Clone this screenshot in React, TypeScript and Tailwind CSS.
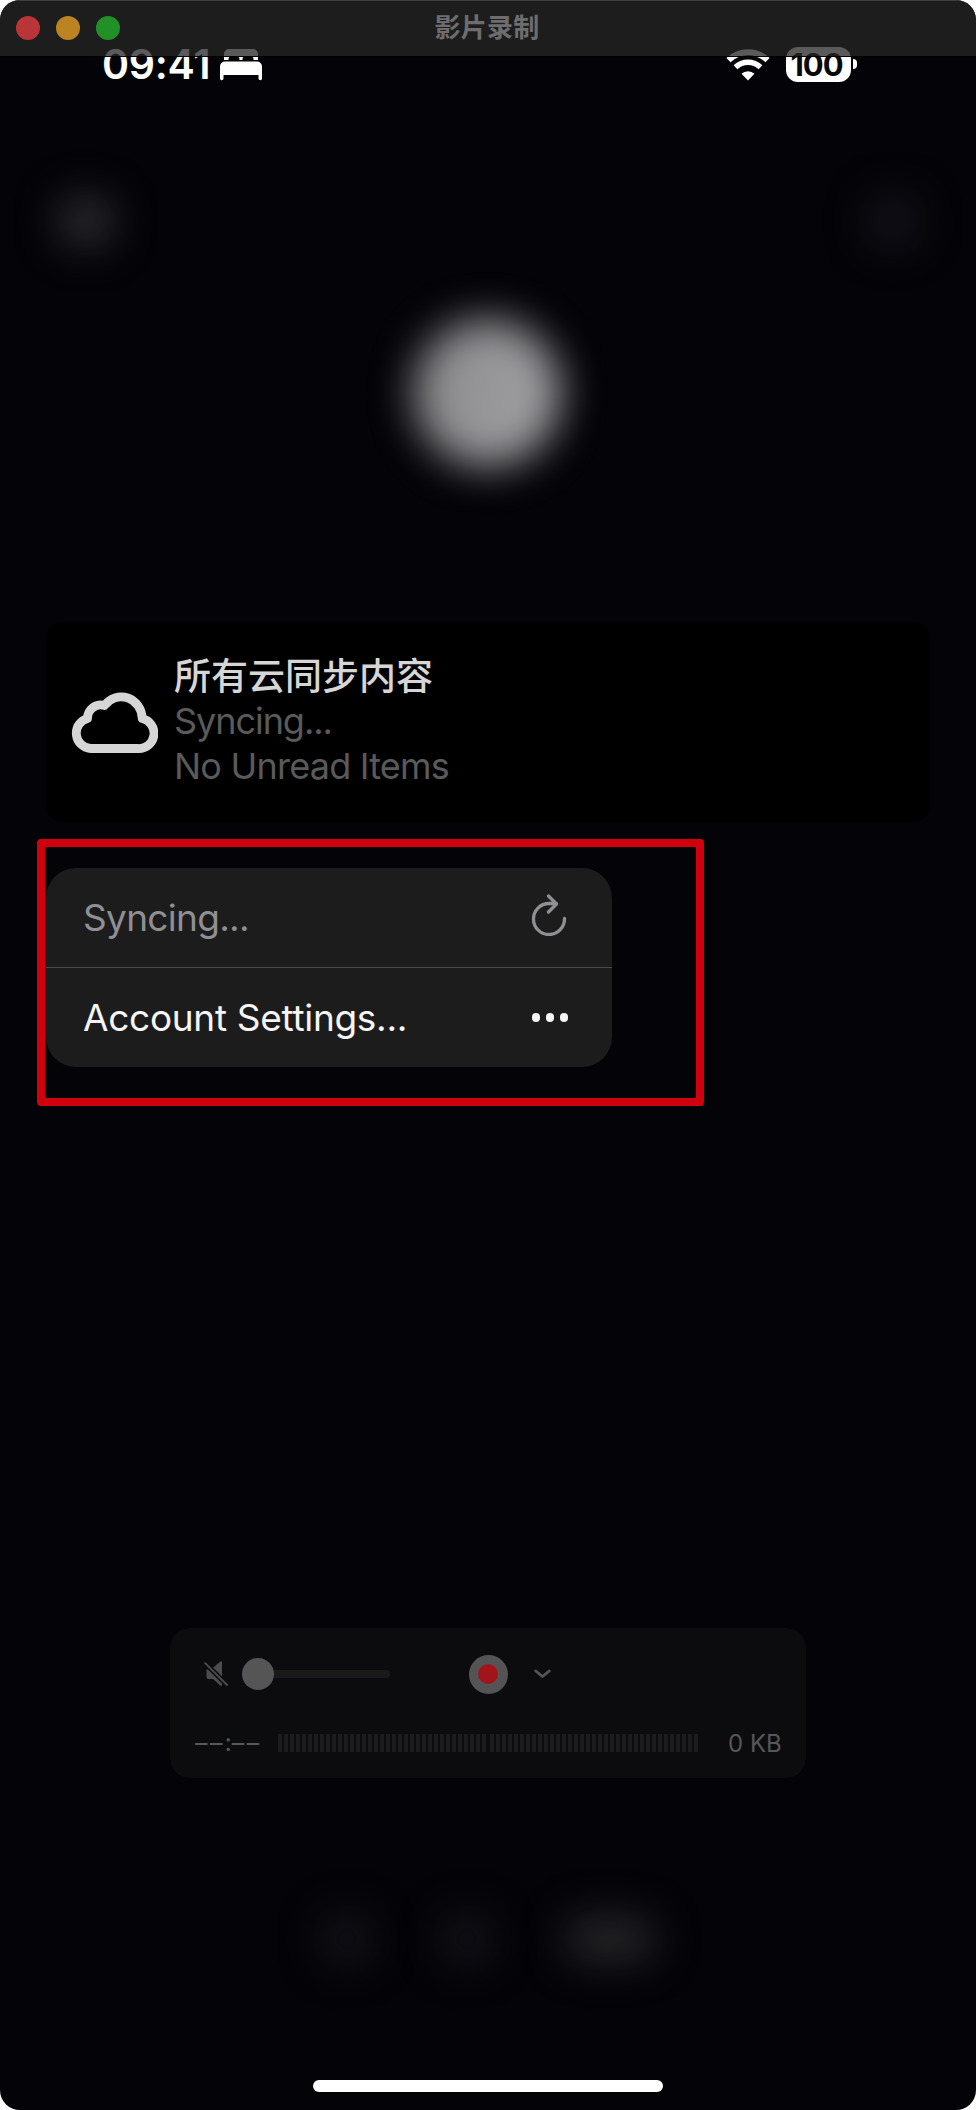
import React from "react";

const sans = "font-['Inter','Noto_Sans_CJK_SC',sans-serif]";

function TitleBar() {
  return (
    <header className="relative z-10 flex h-14 shrink-0 items-center border-t border-[#3f3f40] bg-[#262626]/76 px-4 pb-px shadow-[0_1px_0_#000]">
      <div className="flex flex-1 gap-4">
        <span className="size-6 rounded-full bg-[#b93537]" />
        <span className="size-6 rounded-full bg-[#bb8322]" />
        <span className="size-6 rounded-full bg-[#219127]" />
      </div>
      <h1 className="pr-[2px] pb-px text-[26px] leading-none font-bold tracking-[0.3px] text-[#6d6d6f]">影片录制</h1>
      <div className="flex-1" />
    </header>
  );
}

function BedIcon() {
  return (
    <svg className="h-8 w-[42px]" viewBox="0 0 42 32" fill="#fff">
      <path d="M4 11V5a5 5 0 0 1 5-5h24a5 5 0 0 1 5 5v6h-4.500v-1.200a2 2 0 0 0-2-2h-7a2 2 0 0 0-2 2V11h-3V9.800a2 2 0 0 0-2-2h-7a2 2 0 0 0-2 2V11z" />
      <path d="M0 17.500a5 5 0 0 1 5-5h32a5 5 0 0 1 5 5v12a1.500 1.500 0 0 1-3.500 0V26h-35v3.500a1.500 1.500 0 0 1-3.500 0z" />
    </svg>
  );
}

function WifiIcon() {
  return (
    <svg className="h-[33px] w-11" viewBox="0 0 44 33" fill="none" stroke="#fff">
      <path d="M2.500 12.200a28 28 0 0 1 39 0" strokeWidth="6" />
      <path d="M9.500 19.300a18 18 0 0 1 25 0" strokeWidth="5.500" />
      <path d="M22 32.500l-6.500-6.800a9.500 9.500 0 0 1 13 0z" fill="#fff" stroke="none" />
    </svg>
  );
}

function StatusBar() {
  return (
    <div className="-mt-4 flex h-[50px] shrink-0 items-center pr-[119px] pl-[102px]">
      <span className="w-[118px] pb-px text-[41px] leading-none font-semibold tracking-[-0.3px] text-white">09:41</span>
      <BedIcon />
      <div className="flex-1" />
      <div className="flex items-center pb-[2px]">
        <WifiIcon />
        <span className="ml-4 flex h-[35px] w-[65px] items-center justify-center rounded-xl bg-white pr-1 text-[31px] leading-none font-bold tracking-[-1px] text-[#08080a]">
          100
        </span>
        <span className="ml-0.5 h-2.5 w-1 rounded-r-full bg-white" />
      </div>
    </div>
  );
}

function CloudIcon() {
  return (
    <svg className="h-[62px] w-[87px]" viewBox="71.500 691.500 87 62" fill="none" stroke="#d6d6d6" strokeWidth="8.800" strokeLinejoin="round">
      <path d="M91 749H138.500A15.200 15.200 0 0 0 142.700 719A21 22 0 0 0 105 706A13.300 13.300 0 0 0 88 719A15.300 15.300 0 0 0 91 749Z" />
    </svg>
  );
}

function AccountCard() {
  return (
    <section className="mx-[46px] mt-[155px] flex h-[200px] shrink-0 rounded-2xl bg-black pl-[25px]">
      <div className="pt-[69px]">
        <CloudIcon />
      </div>
      <div className="ml-4 pt-8">
        <h2 className="text-[37px] leading-[45px] font-medium text-[#d6d6d6]">所有云同步内容</h2>
        <p className="text-[36px] leading-[45px] tracking-[-1.05px] text-[#5a5a5a]">Syncing...</p>
        <p className="text-[36px] leading-[45px] tracking-[-0.78px] text-[#5a5a5a]">No Unread Items</p>
      </div>
    </section>
  );
}

function ContextMenu() {
  return (
    <div className="mt-[17px] ml-[37px] h-[267px] w-[667px] shrink-0 rounded-[4px] border-8 border-[#d0000c] pt-[21px] pl-px">
      <ul className="flex h-[199px] w-[566px] flex-col overflow-hidden rounded-[30px] bg-[#1c1c1d] text-[37px]">
        <li className="flex h-[100px] items-center border-b border-[#4a4a4c] pr-[44px] pl-[37px] text-[#8f8f94]">
          <span className="flex-1 tracking-[-0.7px]">Syncing...</span>
          <svg className="mb-1.5 h-[42px] w-[38px]" viewBox="530 895 38 42" fill="none" stroke="currentColor" strokeWidth="3.300" strokeLinecap="round" strokeLinejoin="round">
            <path d="M564.500 919.500A15.500 15.500 0 1 1 549 904.500H556" />
            <path d="M548.500 897L556.500 905L548.500 913" />
          </svg>
        </li>
        <li className="flex h-[99px] items-center pr-[44px] pl-[37px] text-[#f5f5f5]">
          <span className="flex-1 tracking-[-0.3px]">Account Settings...</span>
          <span className="flex gap-[5.700px]">
            <i className="size-[8.200px] rounded-full bg-current" />
            <i className="size-[8.200px] rounded-full bg-current" />
            <i className="size-[8.200px] rounded-full bg-current" />
          </span>
        </li>
      </ul>
    </div>
  );
}

function Meter() {
  return (
    <div className="flex gap-1">
      {[0, 1].map((group) => (
        <div key={group} className="flex gap-0.5">
          {Array.from({ length: 35 }, (_, i) => (
            <i key={i} className="h-[18px] w-1 bg-[#1c1c1e]" />
          ))}
        </div>
      ))}
    </div>
  );
}

function Recorder() {
  return (
    <section className="mt-[522px] ml-[170px] flex h-[150px] w-[636px] shrink-0 flex-col rounded-[20px] bg-[#0c0c0e] text-[#57575a]">
      <div className="mt-[26px] flex h-10 items-center pl-[34px]">
        <svg className="h-[26px] w-[26px]" viewBox="0 0 26 26" fill="#4c4c4e">
          <path d="M2.500 8.500H7L16 .800q2-1.200 2 .800V24q-.200 1.500-2 .300L9 18H4.500q-2 0-2-2z" />
          <path d="M1.500 2.500L23 24" stroke="#0c0c0e" strokeWidth="5" />
          <path d="M1.200 2.200L23 24" stroke="#4c4c4e" strokeWidth="1.900" strokeLinecap="round" />
        </svg>
        <div className="ml-3 flex items-center">
          <span className="size-8 rounded-full bg-[#555556]" />
          <span className="h-2 w-[116px] rounded-r-full bg-[#1a1a1b]" />
        </div>
        <span className="ml-[78.500px] flex size-[39px] items-center justify-center rounded-full bg-[#545456]">
          <i className="size-5 rounded-full bg-[#a0141a]" />
        </span>
        <svg className="ml-[26px] h-2.5 w-[17px]" viewBox="0 0 17 10" fill="none" stroke="#555557" strokeWidth="2.900" strokeLinecap="round" strokeLinejoin="round">
          <path d="M1.800 2L8.500 7.500L15.200 2" />
        </svg>
      </div>
      <div className="mt-[35px] flex h-[28px] items-center pl-[25px]">
        <span className="flex w-[83px] text-[25px] leading-none tracking-[2.4px]">
          <span>––</span>
          <span className="w-[7px] text-[24px] tracking-normal">:</span>
          <span>––</span>
        </span>
        <Meter />
        <span className="ml-[30px] pt-px text-[24px] leading-none">0 KB</span>
      </div>
    </section>
  );
}

export default function App() {
  return (
    <div className="bg-white">
      <main className={`${sans} flex h-[2110px] w-[976px] flex-col overflow-hidden rounded-[20px] bg-[#040408]`}>
        <TitleBar />
        <StatusBar />
        <div className="mt-[106px] flex shrink-0 justify-between pr-[58px] pl-[58px]">
          <span className="h-[50px] w-[56px] rounded-full bg-[#2e2e33] blur-[20px]" />
          <span className="size-[50px] rounded-full bg-[#15151d] blur-[20px]" />
        </div>
        <div className="mt-[73px] ml-[413px] size-[148px] shrink-0 rounded-full bg-linear-[100deg,#88888b,#a4a4a7] blur-[20px]" />
        <AccountCard />
        <ContextMenu />
        <Recorder />
        <div className="mt-[136px] ml-[322px] flex h-[50px] shrink-0 items-center">
          <span className="size-[50px] rounded-full bg-[#14141b] blur-[20px]" />
          <span className="ml-[70px] size-[50px] rounded-full bg-[#14141b] blur-[20px]" />
          <span className="ml-[72px] h-[44px] w-[92px] rounded-full bg-[#262629] blur-[20px]" />
        </div>
        <div className="mt-[116px] ml-[313px] h-3 w-[350px] shrink-0 rounded-full bg-white" />
      </main>
    </div>
  );
}
